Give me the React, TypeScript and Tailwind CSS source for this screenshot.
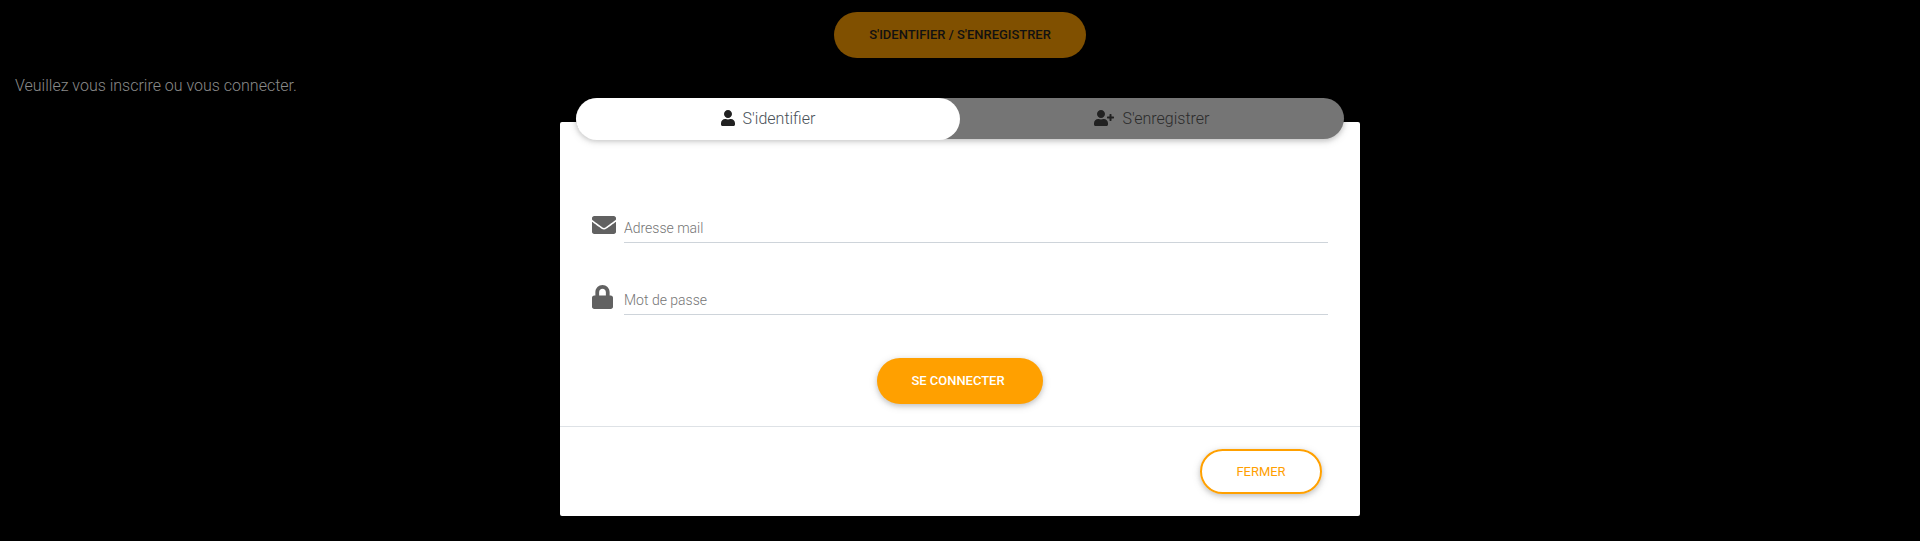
import { FaUser, FaUserPlus, FaEnvelope, FaLock } from "react-icons/fa";

function Field({ icon, type, label }: { icon: React.ReactNode; type: string; label: string }) {
  return (
    <div className="flex h-[38px]">
      <span className="w-8 shrink-0 pt-2 text-2xl text-[#616161]">{icon}</span>
      <input
        type={type}
        placeholder={label}
        className="h-[38px] min-w-0 flex-1 border-b border-[#ced4da] bg-transparent pt-[11px] pb-[2px] text-sm leading-6 outline-none placeholder:text-[#757575]"
      />
    </div>
  );
}

export default function App() {
  return (
    <div className="relative h-[541px] w-full overflow-hidden bg-black font-['Roboto',sans-serif] font-light">
      <div className="flex flex-col pt-3">
        <button className="h-[46px] w-[252px] self-center rounded-full bg-[#805000] text-[12.96px] font-medium text-[#111]">
          S'IDENTIFIER / S'ENREGISTRER
        </button>
        <p className="mt-4 pl-[15px] text-base leading-6 text-[#8a8a8a]">Veuillez vous inscrire ou vous connecter.</p>
      </div>

      <div className="absolute inset-0 flex justify-center pt-[122px]">
        <div className="flex h-[394px] w-[800px] flex-col rounded-[2px] bg-white">
          <div className="mx-4 -mt-6 flex h-[41px] shrink-0 rounded-full bg-[#757575] shadow-[0_2px_5px_0_rgba(0,0,0,0.16),0_2px_10px_0_rgba(0,0,0,0.12)]">
            <button className="flex h-[42px] flex-1 items-center justify-center rounded-full bg-white text-base text-[#495057]">
              <FaUser className="mr-2 mb-[2px] h-4 w-[14px] text-[#212121]" />
              S'identifier
            </button>
            <button className="flex h-[42px] flex-1 items-center justify-center text-base text-[#2b2b2b]">
              <FaUserPlus className="-ml-px mr-[9px] mb-[2px] h-4 w-5 text-[#212121]" />
              S'enregistrer
            </button>
          </div>

          <form className="flex flex-col px-8 pt-[66px]">
            <Field icon={<FaEnvelope />} type="email" label="Adresse mail" />
            <div className="h-[34px]" />
            <Field icon={<FaLock className="w-[21px]" />} type="password" label="Mot de passe" />
            <button
              type="button"
              className="mt-[43px] h-[46px] w-[166px] self-center rounded-full bg-[#ffa000] pr-1 text-[12.96px] font-medium text-white shadow-[0_2px_5px_0_rgba(0,0,0,0.16),0_2px_10px_0_rgba(0,0,0,0.12)]"
            >
              SE CONNECTER
            </button>
          </form>

          <div className="mt-[22px] flex flex-1 items-start justify-end border-t border-[#dee2e6] pt-[22px] pr-[38px]">
            <button className="h-[45px] w-[122px] rounded-full border-2 border-[#ffa000] text-[12.96px] font-normal text-[#ffa000] shadow-[0_2px_5px_0_rgba(0,0,0,0.16),0_2px_10px_0_rgba(0,0,0,0.12)]">
              FERMER
            </button>
          </div>
        </div>
      </div>
    </div>
  );
}
